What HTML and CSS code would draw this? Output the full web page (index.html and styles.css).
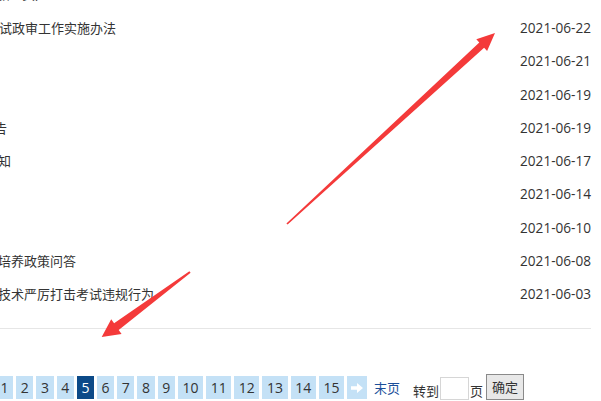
FILE: index.html
```html
<!DOCTYPE html>
<html lang="zh-CN">
<head>
<meta charset="utf-8">
<title>列表</title>
<link rel="stylesheet" href="styles.css">
</head>
<body>
<div class="page">
  <div class="head">(第5页)</div>
  <ul class="list">
    <li class="row"><span class="title t1">试政审工作实施办法</span><span class="date">2021-06-22</span></li>
    <li class="row"><span class="title"></span><span class="date">2021-06-21</span></li>
    <li class="row"><span class="title"></span><span class="date">2021-06-19</span></li>
    <li class="row"><span class="title t4">告</span><span class="date">2021-06-19</span></li>
    <li class="row"><span class="title t2">知</span><span class="date">2021-06-17</span></li>
    <li class="row"><span class="title"></span><span class="date">2021-06-14</span></li>
    <li class="row"><span class="title"></span><span class="date">2021-06-10</span></li>
    <li class="row"><span class="title t2">培养政策问答</span><span class="date">2021-06-08</span></li>
    <li class="row"><span class="title t2">技术严厉打击考试违规行为</span><span class="date">2021-06-03</span></li>
  </ul>
  <div class="rule"></div>
  <div class="pager">
    <a class="pg">1</a>
    <a class="pg">2</a>
    <a class="pg">3</a>
    <a class="pg">4</a>
    <a class="pg cur">5</a>
    <a class="pg">6</a>
    <a class="pg">7</a>
    <a class="pg">8</a>
    <a class="pg">9</a>
    <a class="pg">10</a>
    <a class="pg">11</a>
    <a class="pg">12</a>
    <a class="pg">13</a>
    <a class="pg">14</a>
    <a class="pg">15</a>
    <a class="pg next"><svg width="12" height="10" viewBox="0 0 12 10"><path d="M0 3.2H6V0L12 5L6 10V6.8H0Z" fill="#fff"/></svg></a>
    <a class="last">末页</a>
    <span class="goto">转到</span><span class="inp"></span><span class="goto">页</span>
    <span class="btn">确定</span>
  </div>
</div>
<svg class="marks" width="601" height="401" viewBox="0 0 601 401">
  <polygon fill="#f43a3a" points="287.6,224.6 484.1,47.8 487.1,51.1 495,33 476.3,39.3 479.3,42.6 286.4,223.4"/>
  <polygon fill="#f43a3a" points="190.6,272.8 118.7,329.9 121.6,334 101.7,337 111.2,319.2 114.1,323.3 189.4,271.2"/>
</svg>
</body>
</html>
```
FILE: styles.css
```css
html, body {
  margin: 0;
  padding: 0;
  background: #fff;
  overflow: hidden;
}
body {
  width: 601px;
  height: 401px;
  position: relative;
  font-family: "Open Sans", "Noto Sans CJK SC", sans-serif;
  font-size: 13px;
  color: #333;
}
.page {
  margin-top: -13px;
}
.head {
  height: 14px;
  line-height: 14px;
  font-size: 13px;
  color: #333;
  margin-left: -2px;
}
.list {
  list-style: none;
  margin: 10.4px 10px 0 0;
  padding: 0;
}
.row {
  display: flex;
  justify-content: space-between;
  align-items: center;
  height: 33.25px;
  line-height: 18px;
}
.title {
  white-space: nowrap;
}
.t1 { margin-left: -1px; }
.t2 { margin-left: -2px; }
.t4 { margin-left: -6px; }
.date {
  white-space: nowrap;
  font-size: 13.6px;
}
.rule {
  margin: 17px 10px 0 0;
  height: 1px;
  background: #e6e6e6;
}
.pager {
  display: flex;
  align-items: center;
  margin: 47px 0 0 -4px;
  height: 24px;
  font-size: 14px;
}
.pg {
  display: flex;
  align-items: center;
  justify-content: center;
  height: 23px;
  padding: 0 4.6px;
  margin-right: 3px;
  background: #c4e1f6;
  color: #333;
  font-family: "Open Sans", sans-serif;
  font-size: 14px;
}
.pg.cur {
  background: #0c4a88;
  color: #fff;
}
.pg.next {
  width: 20px;
  padding: 0;
}
.last {
  margin-left: 4px;
  color: #1c4f9a;
  font-size: 13px;
}
.goto {
  font-size: 13px;
  align-self: flex-end;
  line-height: 17px;
}
.last + .goto {
  margin-left: 13px;
}
.inp {
  width: 27px;
  height: 21px;
  border: 1px solid #d6d6d6;
  background: #fff;
  margin: 0 1px;
  align-self: flex-end;
}
.btn {
  margin-left: 3px;
  height: 26px;
  padding: 0 5px;
  box-sizing: border-box;
  border: 1px solid #8a8a8a;
  background: #e8e8e8;
  font-size: 13px;
  display: flex;
  align-items: center;
  align-self: flex-end;
}
.marks {
  position: absolute;
  left: 0;
  top: 0;
  pointer-events: none;
}
```
